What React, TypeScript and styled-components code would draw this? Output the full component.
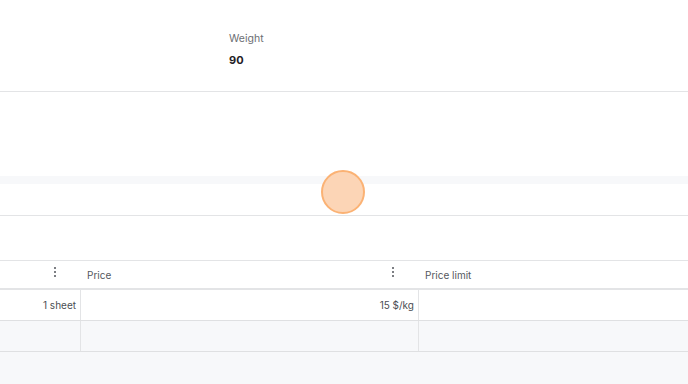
import React from 'react'
import styled, { createGlobalStyle } from 'styled-components'

const GlobalStyle = createGlobalStyle`
  html, body {
    margin: 0;
    padding: 0;
    background: #ffffff;
    font-family: Inter, "Open Sans", sans-serif;
  }
  #root {
    height: 384px;
    overflow: hidden;
  }
`

const Page = styled.div`
  display: flex;
  flex-direction: column;
  height: 384px;
  background: #f7f8fa;
`

const Summary = styled.div`
  height: 92px;
  background: #fff;
  border-bottom: 1px solid #e3e4e6;
  padding-left: 229px;
  box-sizing: border-box;
  display: flex;
  flex-direction: column;
  padding-top: 32px;
`

const FieldLabel = styled.span`
  font-size: 10.5px;
  color: #6b6e73;
  line-height: 13px;
`

const FieldValue = styled.span`
  font-size: 11px;
  font-weight: 700;
  color: #1f2126;
  margin-top: 9px;
  line-height: 13px;
`

const Blank = styled.div<{ $h: number }>`
  height: ${(p) => p.$h}px;
  background: #fff;
`

const Band = styled.div`
  height: 8px;
  background: #f7f8fa;
`

const SliderRow = styled.div`
  height: 31px;
  background: #fff;
  border-bottom: 1px solid #e3e4e6;
  position: relative;
`

const Knob = styled.span`
  position: absolute;
  left: 321px;
  top: -14px;
  width: 40px;
  height: 40px;
  border-radius: 50%;
  background: #fcd5b6;
  border: 2px solid #fbb274;
`

const Table = styled.div`
  background: #fff;
  border-top: 1px solid #e3e4e6;
`

const Row = styled.div<{ $alt?: boolean; $head?: boolean }>`
  display: grid;
  grid-template-columns: 81px 338px 1fr;
  height: ${(p) => (p.$head ? 27 : 30)}px;
  background: ${(p) => (p.$alt ? '#f7f8fa' : '#fff')};
  border-bottom: ${(p) => (p.$head ? '2px solid #e3e4e6' : '1px solid #dfe0e2')};
`

const Cell = styled.div<{ $right?: boolean; $divider?: boolean }>`
  display: flex;
  align-items: center;
  justify-content: ${(p) => (p.$right ? 'flex-end' : 'flex-start')};
  padding: 0 4px 0 6px;
  font-size: 10px;
  color: #4b4e53;
  border-right: ${(p) => (p.$divider ? '1px solid #e3e4e6' : 'none')};
  white-space: nowrap;
  overflow: hidden;
`

const HeadCell = styled.div`
  display: flex;
  align-items: center;
  padding: 0 0 0 6px;
  font-size: 10px;
  color: #55585d;
  position: relative;
`

const Kebab = styled.span`
  position: absolute;
  right: 25px;
  top: 6px;
  display: flex;
  flex-direction: column;
  gap: 2px;
  > i {
    width: 2px;
    height: 2px;
    background: #50535a;
    border-radius: 1px;
  }
`

const Footer = styled.div`
  flex: 1;
  background: #f7f8fa;
`

const Menu = () => (
  <Kebab>
    <i />
    <i />
    <i />
  </Kebab>
)

export default function App() {
  return (
    <>
      <GlobalStyle />
      <Page>
        <Summary>
          <FieldLabel>Weight</FieldLabel>
          <FieldValue>90</FieldValue>
        </Summary>
        <Blank $h={84} />
        <Band />
        <SliderRow>
          <Knob />
        </SliderRow>
        <Blank $h={44} />
        <Table>
          <Row $head>
            <HeadCell>
              <Menu />
            </HeadCell>
            <HeadCell>
              Price
              <Menu />
            </HeadCell>
            <HeadCell>Price limit</HeadCell>
          </Row>
          <Row>
            <Cell $right $divider>1 sheet</Cell>
            <Cell $right $divider>15 $/kg</Cell>
            <Cell />
          </Row>
          <Row $alt>
            <Cell $divider />
            <Cell $divider />
            <Cell />
          </Row>
        </Table>
        <Footer />
      </Page>
    </>
  )
}
